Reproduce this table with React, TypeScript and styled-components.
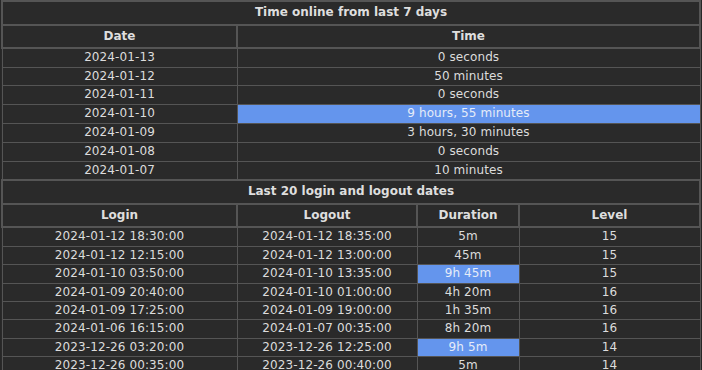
import React from 'react'
import styled, { createGlobalStyle } from 'styled-components'

const GlobalStyle = createGlobalStyle`
  body {
    margin: 0;
    background: #272727;
    font-family: 'DejaVu Sans', Verdana, sans-serif;
    font-size: 12px;
    color: #dcdcdc;
  }
`

const Table = styled.table`
  width: 700px;
  border-collapse: collapse;
  table-layout: fixed;
  background: #2a2a2a;
  margin: 0 0 0 1px;
`

const TitleCell = styled.th`
  border: 2px solid #555;
  padding: 2px 4px;
  line-height: 17.5px;
  font-weight: bold;
  text-align: center;
  color: #dedede;
`

const HeadCell = styled.th`
  border: 2px solid #555;
  padding: 2px 4px;
  line-height: 17.3px;
  font-weight: bold;
  text-align: center;
  color: #dedede;
`

const Cell = styled.td<{ $highlight?: boolean; $compact?: boolean }>`
  border: 1px solid #555;
  padding: 1px 4px;
  line-height: ${(p) => (p.$compact ? '15.45px' : '15.8px')};
  text-align: center;
  white-space: nowrap;
  letter-spacing: 0.1px;
  background: ${(p) => (p.$highlight ? '#6495ed' : 'transparent')};
  color: ${(p) => (p.$highlight ? '#e6ecf8' : '#dcdcdc')};
`

const days = [
  { date: '2024-01-13', time: '0 seconds' },
  { date: '2024-01-12', time: '50 minutes' },
  { date: '2024-01-11', time: '0 seconds' },
  { date: '2024-01-10', time: '9 hours, 55 minutes', top: true },
  { date: '2024-01-09', time: '3 hours, 30 minutes' },
  { date: '2024-01-08', time: '0 seconds' },
  { date: '2024-01-07', time: '10 minutes' },
]

const sessions = [
  { login: '2024-01-12 18:30:00', logout: '2024-01-12 18:35:00', dur: '5m', level: 15 },
  { login: '2024-01-12 12:15:00', logout: '2024-01-12 13:00:00', dur: '45m', level: 15 },
  { login: '2024-01-10 03:50:00', logout: '2024-01-10 13:35:00', dur: '9h 45m', level: 15, top: true },
  { login: '2024-01-09 20:40:00', logout: '2024-01-10 01:00:00', dur: '4h 20m', level: 16 },
  { login: '2024-01-09 17:25:00', logout: '2024-01-09 19:00:00', dur: '1h 35m', level: 16 },
  { login: '2024-01-06 16:15:00', logout: '2024-01-07 00:35:00', dur: '8h 20m', level: 16 },
  { login: '2023-12-26 03:20:00', logout: '2023-12-26 12:25:00', dur: '9h 5m', level: 14, top: true },
  { login: '2023-12-26 00:35:00', logout: '2023-12-26 00:40:00', dur: '5m', level: 14 },
]

export default function App() {
  return (
    <>
      <GlobalStyle />
      <Table>
        <colgroup>
          <col style={{ width: 235 }} />
          <col style={{ width: 180 }} />
          <col style={{ width: 102 }} />
          <col />
        </colgroup>
        <tbody>
          <tr>
            <TitleCell colSpan={4}>Time online from last 7 days</TitleCell>
          </tr>
          <tr>
            <HeadCell>Date</HeadCell>
            <HeadCell colSpan={3}>Time</HeadCell>
          </tr>
          {days.map((d) => (
            <tr key={d.date}>
              <Cell>{d.date}</Cell>
              <Cell colSpan={3} $highlight={d.top}>
                {d.time}
              </Cell>
            </tr>
          ))}
          <tr>
            <TitleCell colSpan={4}>Last 20 login and logout dates</TitleCell>
          </tr>
          <tr>
            <HeadCell>Login</HeadCell>
            <HeadCell>Logout</HeadCell>
            <HeadCell>Duration</HeadCell>
            <HeadCell>Level</HeadCell>
          </tr>
          {sessions.map((s) => (
            <tr key={s.login}>
              <Cell $compact>{s.login}</Cell>
              <Cell $compact>{s.logout}</Cell>
              <Cell $compact $highlight={s.top}>
                {s.dur}
              </Cell>
              <Cell $compact>{s.level}</Cell>
            </tr>
          ))}
        </tbody>
      </Table>
    </>
  )
}
